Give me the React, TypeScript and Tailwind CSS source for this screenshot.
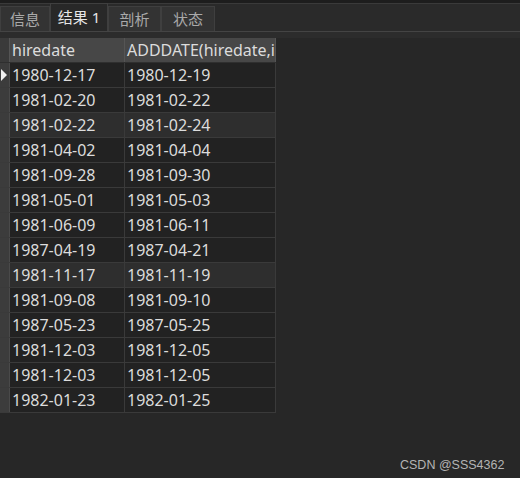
const rows: [string, string][] = [
  ["1980-12-17", "1980-12-19"],
  ["1981-02-20", "1981-02-22"],
  ["1981-02-22", "1981-02-24"],
  ["1981-04-02", "1981-04-04"],
  ["1981-09-28", "1981-09-30"],
  ["1981-05-01", "1981-05-03"],
  ["1981-06-09", "1981-06-11"],
  ["1987-04-19", "1987-04-21"],
  ["1981-11-17", "1981-11-19"],
  ["1981-09-08", "1981-09-10"],
  ["1987-05-23", "1987-05-25"],
  ["1981-12-03", "1981-12-05"],
  ["1981-12-03", "1981-12-05"],
  ["1982-01-23", "1982-01-25"],
];

const tabs = [
  { label: "信息", w: "w-[50px]" },
  { label: "结果 1", w: "w-[58px]", active: true },
  { label: "剖析", w: "w-[53px]" },
  { label: "状态", w: "w-[54px]" },
];

export default function App() {
  return (
    <div
      className="relative h-[478px] w-[520px] overflow-hidden bg-[#272727] text-[16px] text-[#dcdcdc]"
      style={{ fontFamily: '"Noto Sans", "Noto Sans CJK SC", sans-serif' }}
    >
      {/* top strip */}
      <div className="h-[3px] bg-[#1d1d1d]" />
      <div className="h-[1px] bg-[#3a3a3a]" />

      {/* tab bar */}
      <div className="flex h-[28px] items-end border-b border-[#444] bg-[#2a2a2a] text-[15px]">
        {tabs.map((t) => (
          <div
            key={t.label}
            className={[
              t.w,
              "flex items-center justify-center border border-b-0 border-[#3f3f3f] leading-none",
              t.active
                ? "h-[28px] bg-[#282828] text-[#e6e6e6]"
                : "h-[25px] bg-[#333333] text-[#a9a9a9]",
            ].join(" ")}
          >
            {t.label}
          </div>
        ))}
      </div>

      <div className="h-[6px] bg-[#2c2c2c]" />

      {/* grid */}
      <div className="w-[276px]">
        <div className="flex h-[25px] border-b border-[#2f2f2f]">
          <div className="w-[10px] border-r border-[#555] bg-[#3a3a3a]" />
          <div className="flex w-[115px] items-center border-r border-[#555] bg-[#474747] pl-[2px] whitespace-nowrap">
            hiredate
          </div>
          <div className="flex w-[151px] items-center overflow-hidden border-r border-[#555] bg-[#474747] pl-[2px] whitespace-nowrap">
            ADDDATE(hiredate,i
          </div>
        </div>
        {rows.map(([a, b], i) => {
          const hi = i === 2 || i === 8;
          const bg = hi ? "bg-[#2e2e2e]" : "bg-[#222222]";
          return (
            <div key={i} className="flex h-[25px] border-b border-[#3a3a3a]">
              <div className="flex w-[10px] items-center border-r border-[#4a4a4a] bg-[#3c3c3c]">
                {i === 0 && (
                  <span className="ml-[1px] h-0 w-0 border-y-[6px] border-l-[6px] border-y-transparent border-l-[#f0f0f0]" />
                )}
              </div>
              <div className={`flex w-[115px] items-center border-r border-[#3a3a3a] pl-[2px] ${bg}`}>
                {a}
              </div>
              <div className={`flex w-[151px] items-center border-r border-[#3a3a3a] pl-[2px] ${bg}`}>
                {b}
              </div>
            </div>
          );
        })}
      </div>

      <div
        className="absolute left-[400px] top-[456px] text-[12.5px] text-[#b4b4b4]"
        style={{ fontFamily: '"Liberation Sans", Arial, sans-serif' }}
      >
        CSDN @SSS4362
      </div>
    </div>
  );
}
